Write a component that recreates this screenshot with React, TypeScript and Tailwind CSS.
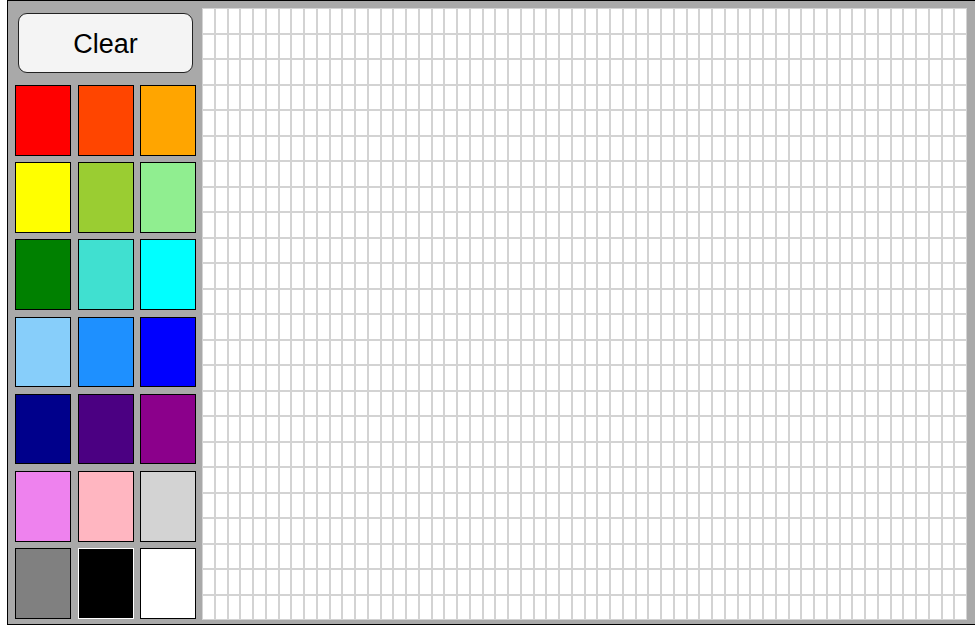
import React from "react";

const colors = [
  "#ff0000", "#ff4500", "#ffa500",
  "#ffff00", "#9acd32", "#90ee90",
  "#008000", "#40e0d0", "#00ffff",
  "#87cefa", "#1e90ff", "#0000ff",
  "#00008b", "#4b0082", "#8b008b",
  "#ee82ee", "#ffb6c1", "#d3d3d3",
  "#808080", "#000000", "#ffffff",
];

const COLS = 60;
const ROWS = 24;

export default function App() {
  const cells = Array.from({ length: COLS * ROWS });
  return (
    <div className="w-[975px] h-[627px] overflow-hidden bg-white" style={{ fontFamily: '"Liberation Sans", Arial, sans-serif' }}>
      <div className="ml-[7px] w-[968px] h-[625px] border border-r-0 border-black bg-[#a9a9a9] flex flex-row">
        <div className="w-[194px] shrink-0 flex flex-col">
          <button className="mt-[12px] ml-[10px] w-[175px] h-[60px] pt-[2px] rounded-[9px] border border-[#222] bg-[#f4f4f4] text-[27px] text-black flex items-center justify-center">
            Clear
          </button>
          <div className="mt-[12px] ml-[7px] grid grid-cols-[56px_56px_56px] auto-rows-[70.7px] gap-x-[6.5px] gap-y-[6.5px]">
            {colors.map((c, i) => (
              <div
                key={i}
                className={c === "#000000" ? "border border-white" : "border border-black"}
                style={{ backgroundColor: c }}
              />
            ))}
          </div>
        </div>
        <div className="mt-[7px] w-[765px] h-[612px] grid grid-cols-[repeat(60,12.75px)] grid-rows-[repeat(24,25.5px)] bg-white">
          {cells.map((_, i) => (
            <div key={i} className="border border-[#d3d3d3] bg-white" />
          ))}
        </div>
      </div>
    </div>
  );
}
